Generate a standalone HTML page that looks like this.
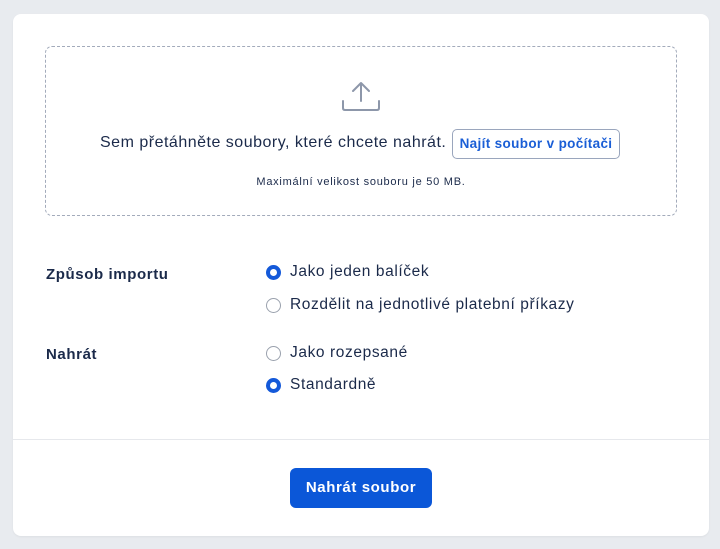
<!DOCTYPE html>
<html><head><meta charset="utf-8"><style>
*{box-sizing:border-box;margin:0;padding:0}
body{width:720px;height:549px;background:#e8ebef;font-family:"Liberation Sans",sans-serif;color:#1b2a4a;position:relative;overflow:hidden}
.card{position:absolute;left:13px;top:14px;width:696px;height:522px;background:#fff;border-radius:8px;box-shadow:0 1px 2px rgba(0,0,0,.05)}
.drop{position:absolute;left:32px;top:32px;width:632px;height:170px;border:1px dashed #a3abbb;border-radius:7px}
.abs{position:absolute;white-space:nowrap}
.btn2{position:absolute;left:439px;top:115px;width:168px;height:30px;border:1.5px solid #9aa6bd;border-radius:5px;color:#1a5ed6;font-weight:bold;font-size:13.5px;line-height:27px;text-align:center;letter-spacing:0.35px}
.lbl{font-weight:bold;font-size:15px;color:#1b2a4a;letter-spacing:0.6px}
.r{position:absolute;left:253px;width:15px;height:15px;border-radius:50%;border:1px solid #9aa1ad}
.r.on{border:4px solid #1459d9}
.rt{position:absolute;left:277px;font-size:15.5px;color:#1b2a4a;white-space:nowrap;letter-spacing:0.6px}
.hr{position:absolute;left:0;right:0;top:425px;border-top:1px solid #e6e8ec}
.main{position:absolute;left:277px;top:454px;width:142px;height:40px;background:#0b57d8;border-radius:6px;color:#fff;font-weight:bold;font-size:15px;line-height:40px;text-align:center;letter-spacing:0.6px}
</style></head><body>
<div class="card">
<div class="drop"></div>
<svg class="abs" style="left:328px;top:67px" width="40" height="32" viewBox="0 0 40 32" fill="none" stroke="#8d97aa" stroke-width="2" stroke-linecap="round" stroke-linejoin="round"><path d="M20 3V20M12 10L20 2L28 10"/><path d="M2 20V27Q2 29 4 29H36Q38 29 38 27V20"/></svg>
<div class="abs" style="left:87px;top:120px;font-size:16px;letter-spacing:0.5px">Sem přetáhněte soubory, které chcete nahrát.</div>
<div class="btn2">Najít soubor v počítači</div>
<div class="abs" style="left:0;width:696px;text-align:center;top:162px;font-size:11px;letter-spacing:0.75px">Maximální velikost souboru je 50 MB.</div>
<div class="abs lbl" style="left:33px;top:252px">Způsob importu</div>
<div class="abs lbl" style="left:33px;top:332px">Nahrát</div>
<div class="r on" style="top:251px"></div><div class="rt" style="top:249px">Jako jeden balíček</div>
<div class="r" style="top:284px"></div><div class="rt" style="top:282px">Rozdělit na jednotlivé platební příkazy</div>
<div class="r" style="top:332px"></div><div class="rt" style="top:330px">Jako rozepsané</div>
<div class="r on" style="top:364px"></div><div class="rt" style="top:362px">Standardně</div>
<div class="hr"></div>
<div class="main">Nahrát soubor</div>
</div>
</body></html>
